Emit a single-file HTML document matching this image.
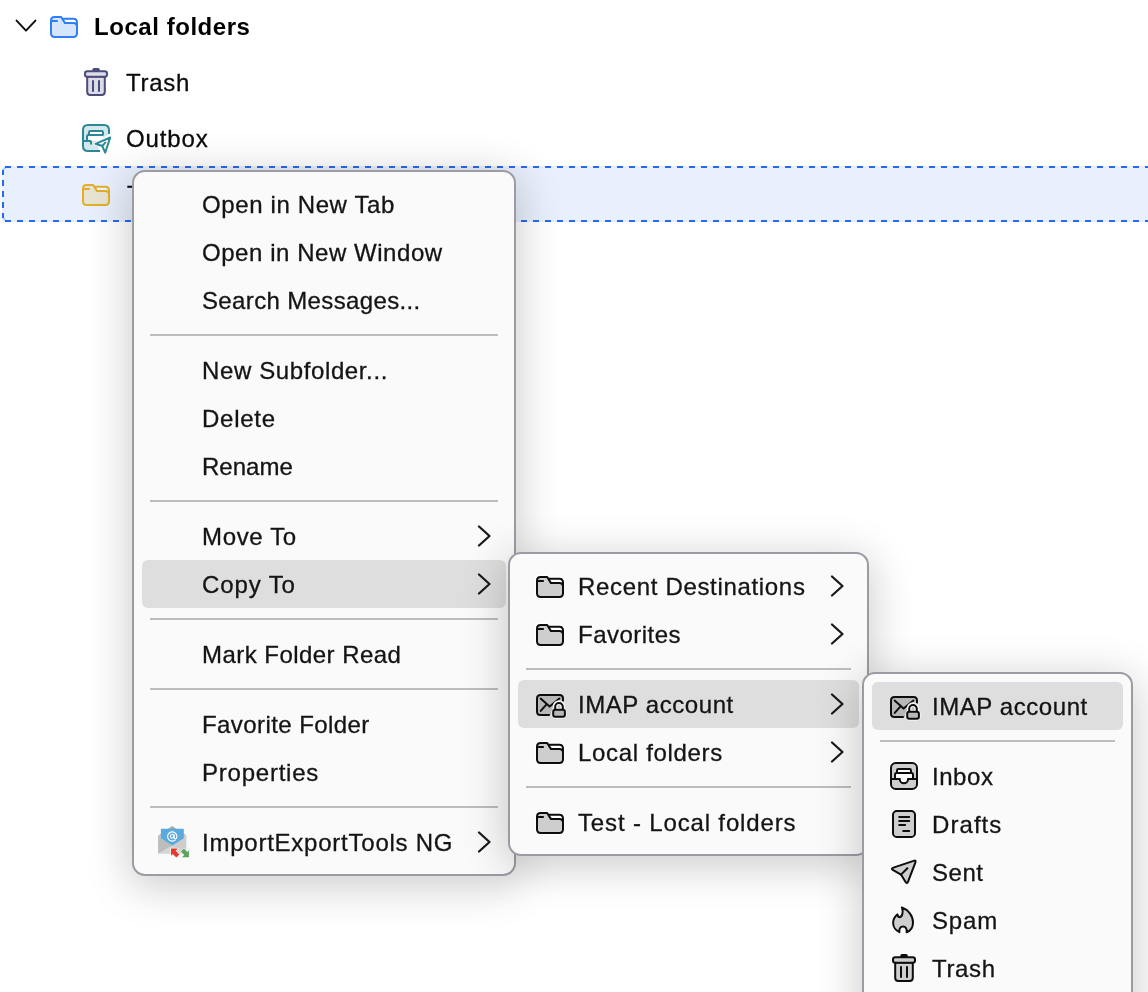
<!DOCTYPE html>
<html><head><meta charset="utf-8"><style>
html,body{margin:0;padding:0;width:1148px;height:992px;overflow:hidden;background:#fff;}
body{position:relative;font-family:"Liberation Sans",sans-serif;}
.t{position:absolute;will-change:transform;-webkit-text-stroke:0.3px #141414;font-size:24px;line-height:24px;white-space:nowrap;color:#141414;letter-spacing:0.55px}
.tt{position:absolute;will-change:transform;font-size:24px;line-height:24px;white-space:nowrap;color:#0b0b0b}
.ic{position:absolute;overflow:visible}
.menu{position:absolute;box-sizing:border-box;background:#fafafa;border:2px solid #9c9ba3;border-radius:13px;box-shadow:0 8px 44px 3px rgba(0,0,0,0.2)}
.sep{position:absolute;height:2px;background:#bdbdbd}
.hl{position:absolute;height:48px;background:#dedede;border-radius:6px}
.dash-h{position:absolute;height:2px;background:repeating-linear-gradient(to right,#2669f4 0 6px,transparent 6px 12px)}
.dash-v{position:absolute;width:2px;background:repeating-linear-gradient(to bottom,#2669f4 0 6px,transparent 6px 11px)}
</style></head><body>
<svg width="0" height="0" style="position:absolute"><defs>
<g id="folder">
  <path d="M1,4.5 Q1,1 4.5,1 H11.2 L12.3,2.8 H23.3 Q27,2.8 27,6.5 V17.3 Q27,21 23.3,21 H4.7 Q1,21 1,17.3 Z" fill="#fff" stroke="#fff" stroke-width="4"/>
  <path d="M1,4.5 Q1,1 4.5,1 H11.2 L12.3,2.8 H23.3 Q27,2.8 27,6.5 V17.3 Q27,21 23.3,21 H4.7 Q1,21 1,17.3 Z" fill="#cecece"/>
  <path d="M12.3,2.8 H23.3 Q27,2.8 27,6.5 V10.8 Q27,7.1 23.3,7.1 H15 Z" fill="#fff"/>
  <path d="M1,4.5 Q1,1 4.5,1 H11.2 L12.3,2.8 H23.3 Q27,2.8 27,6.5 V17.3 Q27,21 23.3,21 H4.7 Q1,21 1,17.3 Z M11.2,1 L15,7.1 H23.3 Q27,7.1 27,10.8 M1,4.9 H7.8" fill="none" stroke="#0d0d0d" stroke-width="2" stroke-linejoin="round"/>
</g>
<g id="folderblue">
  <path d="M1,4.5 Q1,1 4.5,1 H11.2 L12.3,2.8 H23.3 Q27,2.8 27,6.5 V17.3 Q27,21 23.3,21 H4.7 Q1,21 1,17.3 Z" fill="#d5e5fc"/>
  <path d="M12.3,2.8 H23.3 Q27,2.8 27,6.5 V10.8 Q27,7.1 23.3,7.1 H15 Z" fill="#fff"/>
  <path d="M1,4.5 Q1,1 4.5,1 H11.2 L12.3,2.8 H23.3 Q27,2.8 27,6.5 V17.3 Q27,21 23.3,21 H4.7 Q1,21 1,17.3 Z M11.2,1 L15,7.1 H23.3 Q27,7.1 27,10.8 M1,4.9 H7.8" fill="none" stroke="#2e7ef5" stroke-width="2" stroke-linejoin="round"/>
</g>
<g id="folderyellow">
  <path d="M1,4.5 Q1,1 4.5,1 H11.2 L12.3,2.8 H23.3 Q27,2.8 27,6.5 V17.3 Q27,21 23.3,21 H4.7 Q1,21 1,17.3 Z" fill="#e7e5d1"/>
  <path d="M12.3,2.8 H23.3 Q27,2.8 27,6.5 V10.8 Q27,7.1 23.3,7.1 H15 Z" fill="#eef4fd"/>
  <path d="M1,4.5 Q1,1 4.5,1 H11.2 L12.3,2.8 H23.3 Q27,2.8 27,6.5 V17.3 Q27,21 23.3,21 H4.7 Q1,21 1,17.3 Z M11.2,1 L15,7.1 H23.3 Q27,7.1 27,10.8 M1,4.9 H7.8" fill="none" stroke="#e2ae2c" stroke-width="2" stroke-linejoin="round"/>
</g>
<g id="trashtree">
  <rect x="8.3" y="0" width="7.5" height="3.4" rx="1.7" fill="#4b4b7d"/>
  <path d="M3.2,8.6 V23.8 Q3.2,27 6.4,27 H17.6 Q20.8,27 20.8,23.8 V8.6 Z" fill="#dcdce6" stroke="#4b4b7d" stroke-width="2"/>
  <rect x="1" y="3.2" width="22" height="5.6" rx="2.3" fill="#dcdce6" stroke="#4b4b7d" stroke-width="2"/>
  <path d="M9,12.2 V23.8 M15,12.2 V23.8" stroke="#4b4b7d" stroke-width="2"/>
</g>
<g id="trashm">
  <rect x="8.3" y="0" width="7.5" height="3.4" rx="1.7" fill="#0d0d0d"/>
  <path d="M3.2,8.6 V23.8 Q3.2,27 6.4,27 H17.6 Q20.8,27 20.8,23.8 V8.6 Z" fill="#cecece" stroke="#0d0d0d" stroke-width="2"/>
  <rect x="1" y="3.2" width="22" height="5.6" rx="2.3" fill="#cecece" stroke="#0d0d0d" stroke-width="2"/>
  <path d="M9,12.2 V23.8 M15,12.2 V23.8" stroke="#0d0d0d" stroke-width="2"/>
</g>
<g id="outbox">
  <path d="M18,27 H6 Q1,27 1,22 V6 Q1,1 6,1 H22 Q27,1 27,6 V10 L14,19.5 Z" fill="#d3e8eb"/>
  <path d="M5,17 V12.4 Q5,11 6.4,11 H21.5 L20,17 Z" fill="#fff"/>
  <rect x="7" y="7" width="14" height="4" fill="#fff"/>
  <path d="M18,27 H6 Q1,27 1,22 V6 Q1,1 6,1 H22 Q27,1 27,6 V10" fill="none" stroke="#2e8795" stroke-width="2"/>
  <path d="M7,11 V8.4 Q7,7 8.4,7 H19.6 Q21,7 21,8.4 V11 M5,17 V12.4 Q5,11 6.4,11 H21.5 M1,17 H8.2 Q9,17 9,17.8 V20.5" fill="none" stroke="#2e8795" stroke-width="2"/>
  <path d="M28.2,13.5 L13.6,19.8 L20.2,22 L23.2,28.6 Z" fill="#fff" stroke="#fff" stroke-width="3.5" stroke-linejoin="round"/>
  <path d="M28.2,13.5 L13.6,19.8 L20.2,22 L23.2,28.6 Z M20.2,22 L23.4,18.6" fill="none" stroke="#2e8795" stroke-width="2" stroke-linejoin="round" stroke-linecap="round"/>
</g>
<g id="imap">
  <path d="M1,4.5 Q1,1 4.5,1 H23.5 Q27,1 27,4.5 V17.5 Q27,21 23.5,21 H4.5 Q1,21 1,17.5 Z" fill="rgba(0,0,0,0.17)"/>
  <path d="M13.8,21 H4.5 Q1,21 1,17.5 V4.5 Q1,1 4.5,1 H23.5 Q27,1 27,4.5 V7.5" fill="none" stroke="#0d0d0d" stroke-width="2"/>
  <path d="M4.6,4.6 L13.6,12.6 L23.4,4.6 M10.3,10.6 L4.7,16.9" fill="none" stroke="#0d0d0d" stroke-width="2" stroke-linecap="round" stroke-linejoin="round"/>
  <path d="M19.2,15.5 V12.5 A3.8,3.8 0 0 1 26.8,12.5 V15.5" fill="none" stroke="#f2f2f2" stroke-width="5"/>
  <rect x="17.2" y="15.8" width="11.7" height="7" rx="2.6" fill="#f2f2f2" stroke="#f2f2f2" stroke-width="4"/>
  <path d="M19.2,15.8 V12.8 A3.8,3.8 0 0 1 26.8,12.8 V15.8" fill="none" stroke="#0d0d0d" stroke-width="2"/>
  <rect x="17.2" y="15.8" width="11.7" height="7" rx="2" fill="#b9b9b9" stroke="#0d0d0d" stroke-width="2"/>
</g>
<g id="inbox">
  <rect x="-0.6" y="-0.6" width="29.2" height="29.2" rx="6.4" fill="#fff"/>
  <rect x="1" y="1" width="26" height="26" rx="4.8" fill="#cecece"/>
  <path d="M5,17 V12.4 Q5,11 6.4,11 H21.6 Q23,11 23,12.4 V17 H18.1 A4.2,4.2 0 0 1 9.7,17 Z" fill="#fff"/>
  <rect x="7" y="7" width="14" height="4" fill="#fff"/>
  <rect x="1" y="1" width="26" height="26" rx="4.8" fill="none" stroke="#0d0d0d" stroke-width="2"/>
  <path d="M7,11 V8.4 Q7,7 8.4,7 H19.6 Q21,7 21,8.4 V11 M5,17 V12.4 Q5,11 6.4,11 H21.6 Q23,11 23,12.4 V17 M1,17 H9.7 A4.2,4.2 0 0 0 18.1,17 H27" fill="none" stroke="#0d0d0d" stroke-width="2"/>
</g>
<g id="drafts">
  <rect x="1" y="1" width="22" height="26" rx="3.8" fill="#cecece" stroke="#0d0d0d" stroke-width="2"/>
  <path d="M7.2,7 H17.2 M7.2,11 H17.2 M7.2,15 H13.1 M11.2,21 H17.2" stroke="#0d0d0d" stroke-width="2" stroke-linecap="round"/>
</g>
<g id="sent">
  <path d="M25.33,4.60 Q26.40,1.80 23.58,2.83 L3.4,9.6 Q0.6,10.6 3.2,12.1 L11,16.6 L15.43,23.84 Q17.00,26.40 18.07,23.60 Z" fill="#cecece" stroke="#0d0d0d" stroke-width="2" stroke-linejoin="round"/>
  <path d="M11,16.6 L17.4,10.2" stroke="#0d0d0d" stroke-width="2" stroke-linecap="round"/>
</g>
<g id="spam">
  <path d="M9.9,1.5 C15.8,3.5 21,9.5 21,16.5 C21,21.5 18,25 14.6,26.2 C15.2,23 13.8,20.6 11,20.6 C8.2,20.6 6.8,23 7.4,26.2 C4,24.8 1.1,21 1.1,16.8 C1.1,12.8 3,10.3 5.3,8.4 C5.8,10 6.5,11.2 7.8,11.2 C10.6,10.8 11.4,5 9.9,1.5 Z" fill="#cecece" stroke="#0d0d0d" stroke-width="2" stroke-linejoin="round"/>
</g>
<g id="iet">
  <path d="M8.2,15.4 L22.2,6 L36.3,15.4 Z" fill="#a9a9a9"/>
  <rect x="8.2" y="15.2" width="28.1" height="18.4" rx="0.8" fill="#cdcdcd"/>
  <path d="M8.2,15.4 L22.2,25.4 L8.2,33.6 Z" fill="#bdbdbd"/>
  <path d="M8.2,33.6 L22.2,25.4 L36.3,33.6 Z" fill="#d6d6d6"/>
  <path d="M11.6,8.8 H33.1 Q33.8,8.8 33.8,9.6 V18.2 L22.2,25.4 L10.9,18.2 V9.6 Q10.9,8.8 11.6,8.8 Z" fill="#5aaade"/>
  <path d="M25.6,19.6 A4.6,4.6 0 1 1 26.8,16.3 V17.3 Q26.8,18.8 25.4,18.8 Q24,18.8 24,17.3 V14.2" fill="none" stroke="#fff" stroke-width="1.1"/>
  <circle cx="22.2" cy="16.3" r="1.8" fill="none" stroke="#fff" stroke-width="1.1"/>
  <path d="M21,28.6 L27.9,28.6 L25.7,30.8 L29.4,34.4 L26.3,37.6 L22.7,34 L21,35.8 Z" fill="#e8392a" stroke="#f7f7f7" stroke-width="1.4" paint-order="stroke"/>
  <path d="M38.9,37.3 L32,37.3 L34.2,35 L30.8,31.5 L33.9,28.6 L37.3,32 L38.9,30.3 Z" fill="#5ea35c" stroke="#f7f7f7" stroke-width="1.4" paint-order="stroke"/>
</g>
</defs>
</svg>
<!-- folder tree -->
<svg class="ic" style="left:14px;top:18px" width="24" height="16" viewBox="0 0 24 16"><path d="M2.6,2.6 L12,12.6 L21.4,2.6" fill="none" stroke="#111" stroke-width="2" stroke-linecap="round" stroke-linejoin="round"/></svg>
<svg class="ic" style="left:50px;top:16px" width="28" height="22" viewBox="0 0 28 22"><use href="#folderblue"/></svg>
<div class="tt" style="left:94px;top:15px;font-weight:700;color:#000;letter-spacing:0.55px">Local folders</div>
<svg class="ic" style="left:84px;top:68px" width="24" height="28" viewBox="0 0 24 28"><use href="#trashtree"/></svg>
<div class="tt" style="left:126px;top:71px;letter-spacing:0.7px;-webkit-text-stroke:0.3px #0b0b0b">Trash</div>
<svg class="ic" style="left:82px;top:124px" width="30" height="30" viewBox="0 0 30 30"><use href="#outbox"/></svg>
<div class="tt" style="left:126px;top:127px;letter-spacing:0.88px;-webkit-text-stroke:0.3px #0b0b0b">Outbox</div>
<div style="position:absolute;left:2px;top:166px;width:1200px;height:56px;background:#e7f0fc;border-radius:4px"></div>
<div class="dash-h" style="left:5px;top:166px;width:1200px"></div>
<div class="dash-h" style="left:5px;top:220px;width:1200px"></div>
<div class="dash-v" style="left:2px;top:170px;height:48px;background-position:0 -1px"></div>
<svg class="ic" style="left:0;top:160px" width="12" height="70" viewBox="0 160 12 70"><path d="M3,170.2 L6,167 M3,217.8 L6,221" stroke="#2669f4" stroke-width="1.4" opacity="0.35"/></svg>
<svg class="ic" style="left:82px;top:184px" width="28" height="22" viewBox="0 0 28 22"><use href="#folderyellow"/></svg>
<div class="tt" style="left:127px;top:183px;-webkit-text-stroke:0.3px #0b0b0b">Test</div>
<div class="menu" style="left:132px;top:170px;width:384px;height:706px"></div>
<div class="t" style="left:202px;top:193px;letter-spacing:0.621px">Open in New Tab</div>
<div class="t" style="left:202px;top:241px;letter-spacing:0.550px">Open in New Window</div>
<div class="t" style="left:202px;top:289px;letter-spacing:0.362px">Search Messages...</div>
<div class="sep" style="left:150px;top:334px;width:348px"></div>
<div class="t" style="left:202px;top:359px;letter-spacing:0.617px">New Subfolder...</div>
<div class="t" style="left:202px;top:407px;letter-spacing:0.750px">Delete</div>
<div class="t" style="left:202px;top:455px;letter-spacing:0.030px">Rename</div>
<div class="sep" style="left:150px;top:500px;width:348px"></div>
<div class="t" style="left:202px;top:525px;letter-spacing:0.650px">Move To</div>
<svg class="ic" style="left:477px;top:525px" width="15" height="22" viewBox="0 0 15 22"><path d="M2,1.5 L12.5,11 L2,20.5" fill="none" stroke="#1a1a1a" stroke-width="2.3" stroke-linecap="round" stroke-linejoin="round"/></svg>
<div class="hl" style="left:142px;top:560px;width:364px"></div>
<div class="t" style="left:202px;top:573px;letter-spacing:0.883px">Copy To</div>
<svg class="ic" style="left:477px;top:573px" width="15" height="22" viewBox="0 0 15 22"><path d="M2,1.5 L12.5,11 L2,20.5" fill="none" stroke="#1a1a1a" stroke-width="2.3" stroke-linecap="round" stroke-linejoin="round"/></svg>
<div class="sep" style="left:150px;top:618px;width:348px"></div>
<div class="t" style="left:202px;top:643px;letter-spacing:0.457px">Mark Folder Read</div>
<div class="sep" style="left:150px;top:688px;width:348px"></div>
<div class="t" style="left:202px;top:713px;letter-spacing:0.421px">Favorite Folder</div>
<div class="t" style="left:202px;top:761px;letter-spacing:0.772px">Properties</div>
<div class="sep" style="left:150px;top:806px;width:348px"></div>
<svg class="ic" style="left:150px;top:820px" width="44" height="40" viewBox="0 0 44 40"><use href="#iet"/></svg>
<div class="t" style="left:202px;top:831px;letter-spacing:0.761px">ImportExportTools NG</div>
<svg class="ic" style="left:477px;top:831px" width="15" height="22" viewBox="0 0 15 22"><path d="M2,1.5 L12.5,11 L2,20.5" fill="none" stroke="#1a1a1a" stroke-width="2.3" stroke-linecap="round" stroke-linejoin="round"/></svg>
<div class="menu" style="left:508px;top:552px;width:361px;height:304px"></div>
<svg class="ic" style="left:536px;top:576px" width="28" height="22" viewBox="0 0 28 22"><use href="#folder"/></svg>
<div class="t" style="left:578px;top:575px;letter-spacing:0.672px">Recent Destinations</div>
<svg class="ic" style="left:830px;top:575px" width="15" height="22" viewBox="0 0 15 22"><path d="M2,1.5 L12.5,11 L2,20.5" fill="none" stroke="#1a1a1a" stroke-width="2.3" stroke-linecap="round" stroke-linejoin="round"/></svg>
<svg class="ic" style="left:536px;top:624px" width="28" height="22" viewBox="0 0 28 22"><use href="#folder"/></svg>
<div class="t" style="left:578px;top:623px;letter-spacing:0.475px">Favorites</div>
<svg class="ic" style="left:830px;top:623px" width="15" height="22" viewBox="0 0 15 22"><path d="M2,1.5 L12.5,11 L2,20.5" fill="none" stroke="#1a1a1a" stroke-width="2.3" stroke-linecap="round" stroke-linejoin="round"/></svg>
<div class="sep" style="left:526px;top:668px;width:325px"></div>
<div class="hl" style="left:518px;top:680px;width:341px"></div>
<svg class="ic" style="left:536px;top:694px" width="32" height="26" viewBox="0 0 32 26"><use href="#imap"/></svg>
<div class="t" style="left:578px;top:693px;letter-spacing:0.568px">IMAP account</div>
<svg class="ic" style="left:830px;top:693px" width="15" height="22" viewBox="0 0 15 22"><path d="M2,1.5 L12.5,11 L2,20.5" fill="none" stroke="#1a1a1a" stroke-width="2.3" stroke-linecap="round" stroke-linejoin="round"/></svg>
<svg class="ic" style="left:536px;top:742px" width="28" height="22" viewBox="0 0 28 22"><use href="#folder"/></svg>
<div class="t" style="left:578px;top:741px;letter-spacing:0.683px">Local folders</div>
<svg class="ic" style="left:830px;top:741px" width="15" height="22" viewBox="0 0 15 22"><path d="M2,1.5 L12.5,11 L2,20.5" fill="none" stroke="#1a1a1a" stroke-width="2.3" stroke-linecap="round" stroke-linejoin="round"/></svg>
<div class="sep" style="left:526px;top:786px;width:325px"></div>
<svg class="ic" style="left:536px;top:812px" width="28" height="22" viewBox="0 0 28 22"><use href="#folder"/></svg>
<div class="t" style="left:578px;top:811px;letter-spacing:0.845px">Test - Local folders</div>
<div class="menu" style="left:862px;top:672px;width:271px;height:420px"></div>
<div class="hl" style="left:872px;top:682px;width:251px"></div>
<svg class="ic" style="left:890px;top:696px" width="32" height="26" viewBox="0 0 32 26"><use href="#imap"/></svg>
<div class="t" style="left:932px;top:695px;letter-spacing:0.568px">IMAP account</div>
<div class="sep" style="left:880px;top:740px;width:235px"></div>
<svg class="ic" style="left:890px;top:762px" width="28" height="28" viewBox="0 0 28 28"><use href="#inbox"/></svg>
<div class="t" style="left:932px;top:765px;letter-spacing:0.550px">Inbox</div>
<svg class="ic" style="left:892px;top:810px" width="24" height="28" viewBox="0 0 24 28"><use href="#drafts"/></svg>
<div class="t" style="left:932px;top:813px;letter-spacing:1.070px">Drafts</div>
<svg class="ic" style="left:890px;top:858px" width="28" height="28" viewBox="0 0 28 28"><use href="#sent"/></svg>
<div class="t" style="left:932px;top:861px;letter-spacing:0.550px">Sent</div>
<svg class="ic" style="left:892px;top:906px" width="22" height="28" viewBox="0 0 22 28"><use href="#spam"/></svg>
<div class="t" style="left:932px;top:909px;letter-spacing:0.817px">Spam</div>
<svg class="ic" style="left:892px;top:954px" width="24" height="28" viewBox="0 0 24 28"><use href="#trashm"/></svg>
<div class="t" style="left:932px;top:957px;letter-spacing:0.650px">Trash</div>
<div class="t" style="left:932px;top:1005px;letter-spacing:0.550px">Archives</div>
</body></html>
